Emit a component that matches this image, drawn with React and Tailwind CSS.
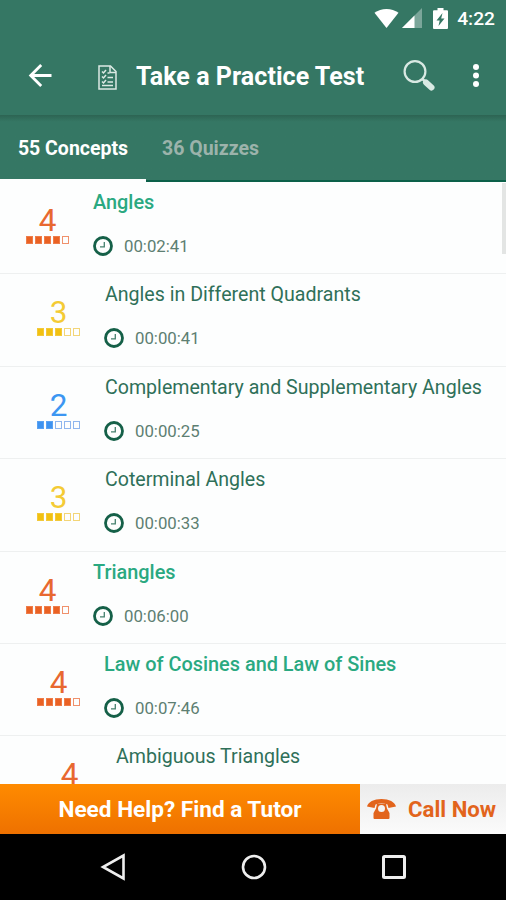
import React from 'react';
import clsx from 'clsx';

const LEVELS = {
    2: { text: 'text-[#3c96f2]', border: 'border-[#8fb6ee]', fill: 'bg-[#3e93f0] border-[#5aa2f2]' },
    3: { text: 'text-[#f4cb35]', border: 'border-[#f3d577]', fill: 'bg-[#f2c110] border-[#f2c93a]' },
    4: { text: 'text-[#e86830]', border: 'border-[#f0916c]', fill: 'bg-[#ea6224] border-[#ee7d4a]' },
};

const CONCEPTS = [
    { title: 'Angles', time: '00:02:41', level: 4, depth: 0, group: true },
    { title: 'Angles in Different Quadrants', time: '00:00:41', level: 3, depth: 1 },
    { title: 'Complementary and Supplementary Angles', time: '00:00:25', level: 2, depth: 1 },
    { title: 'Coterminal Angles', time: '00:00:33', level: 3, depth: 1 },
    { title: 'Triangles', time: '00:06:00', level: 4, depth: 0, group: true },
    { title: 'Law of Cosines and Law of Sines', time: '00:07:46', level: 4, depth: 1, group: true },
    { title: 'Ambiguous Triangles', level: 4, depth: 2 },
];

const INDENT = ['pl-[26px]', 'pl-[37px]', 'pl-[48px]'];

function StatusBar() {
    return (
        <div className="flex h-9 items-center justify-end pr-[11px] text-white">
            <svg className="mr-[3px] h-[21px] w-[25px]" viewBox="0 0 26 21" fill="currentColor"><path d="M0.5 4.6C7.5-.8 18.5-.8 25.5 4.6L13 20.5z" /></svg>
            <svg className="mr-[11px] h-5 w-5" viewBox="0 0 20 20" fill="currentColor"><path d="M20 0v20H0z" opacity="0.35" /><path d="M12.5 7.5V20H0z" /></svg>
            <svg className="mr-[9px] h-[21px] w-[15px]" viewBox="0 0 15 21"><path fill="currentColor" d="M1 2.2h3.5V0h6v2.2H14q1 0 1 1V20q0 1-1 1H1q-1 0-1-1V3.200q0-1 1-1z" /><path fill="#357764" d="M9.5 5L3.5 12.5h3.200L5.500 18l6-7.600H8.200z" /></svg>
            <span className="pt-px text-[19.2px] font-medium leading-none">4:22</span>
        </div>
    );
}

function Toolbar() {
    return (
        <div className="flex h-[79px] items-center pl-[28px] text-white">
            <svg className="h-6 w-6" viewBox="0 0 24 24" fill="none" stroke="currentColor" strokeWidth="2.8"><path d="M23.5 11.500H3M13.200 1L2.700 11.500l10.500 10.500" /></svg>
            <svg className="ml-[46px] mt-1 h-[25px] w-[19px]" viewBox="0 0 19 25" fill="none" stroke="#dce9e4" strokeWidth="1.5">
                <path d="M1 1h11.500L18 6.500V24H1z" />
                <path d="M12 1v6.500h6" />
                <path d="M4 6.500l1.500 1.500L8 5M4 11.500L5.500 13 8 10M4 16.500L5.500 18 8 15M9.500 8h2M9.500 12.500H15M9.500 17H15M4 20.500h11" />
            </svg>
            <h1 className="ml-[19px] mt-0.5 whitespace-nowrap text-[25px] font-bold leading-none tracking-[0.06px]">Take a Practice Test</h1>
            <svg className="ml-auto mr-[38px] h-[32px] w-[32px]" viewBox="0 0 32 32" fill="none" stroke="#d9e9e3">
                <circle cx="12" cy="11.500" r="10.400" strokeWidth="2.200" />
                <path d="M19 18.500l3 3" strokeWidth="2.5" />
                <path d="M23 22.500l5.500 5" strokeWidth="6" strokeLinecap="round" />
            </svg>
            <svg className="mr-[27px] h-6 w-[6px]" viewBox="0 0 6 24" fill="currentColor"><circle cx="3" cy="3" r="3" /><circle cx="3" cy="11.5" r="3" /><circle cx="3" cy="20" r="3" /></svg>
        </div>
    );
}

function Tabs() {
    return (
        <div className="flex h-[67px] bg-linear-to-b from-[#2d6453] via-[#357764] via-10% to-[#357764] text-[19.5px] font-bold leading-none">
            <div className="flex w-[146px] items-center justify-center whitespace-nowrap border-b-3 border-[#fdfefe] pt-[3px] text-white">55 Concepts</div>
            <div className="flex flex-1 items-center whitespace-nowrap border-b-2 border-[#0b6049] pl-4 pt-0.5 text-[#9cb3ab]">36 Quizzes</div>
        </div>
    );
}

function LevelBadge({ level }) {
    const color = LEVELS[level];
    return (
        <div className="flex w-[43px] flex-col items-center pt-[23px]">
            <span className={clsx('text-[31.5px] leading-8', color.text)}>{level}</span>
            <div className="flex gap-[2px]">
                {[1, 2, 3, 4, 5].map((n) => (
                    <span key={n} className={clsx('-mt-px h-2 w-[7px] border', n <= level ? color.fill : color.border)} />
                ))}
            </div>
        </div>
    );
}

function ConceptRow({ concept }) {
    return (
        <li className={clsx('flex h-[92.4px] shrink-0 border-b border-[#eef0f0]', INDENT[concept.depth])}>
            <LevelBadge level={concept.level} />
            <div className="ml-6 flex flex-col pt-[9px]">
                <span className={clsx('whitespace-nowrap leading-6', concept.group ? 'text-[19.9px] font-medium text-[#2aa981]' : 'ml-px text-[19.6px] text-[#2f7059]')}>{concept.title}</span>
                {concept.time && (
                    <div className="mt-[21px] flex items-center">
                        <svg className="h-5 w-5" viewBox="0 0 20 20" fill="none" stroke="#156048"><circle cx="10" cy="10" r="8.5" strokeWidth="2.8" /><path d="M11.300 6v4.800H7" strokeWidth="1.3" opacity="0.8" /></svg>
                        <span className="ml-[11px] text-[16.8px] leading-5 text-[#5d7f72]">{concept.time}</span>
                    </div>
                )}
            </div>
        </li>
    );
}

function HelpBar() {
    return (
        <div className="flex h-[49.5px] leading-none">
            <button className="w-[360px] whitespace-nowrap bg-linear-to-b from-[#ff8b00] to-[#ee7100] pt-[3px] text-[22.6px] font-bold text-white">Need Help? Find a Tutor</button>
            <button className="flex flex-1 items-center whitespace-nowrap bg-linear-to-b from-[#ececec] to-[#fbfbfb] pl-[7px] text-[22.2px] font-bold text-[#e2641c]">
                <svg className="mr-[12px] h-5 w-[29px] shrink-0" viewBox="0 0 29 20" fill="#e2641c">
                    <path d="M0 7.500C1 3 7 0 14.500 0S28 3 29 7.500L21.500 9 20.500 5.500C17 4.200 12 4.200 8.500 5.500L7.500 9z" />
                    <path fillRule="evenodd" d="M10 5h9l1 4.500 2.500 4.500v5q0 1-1 1h-14q-1 0-1-1v-5L9 9.500zM14.500 6a3.500 3.500 0 100 7 3.500 3.500 0 000-7z" />
                </svg>
                <span className="pt-px">Call Now</span>
            </button>
        </div>
    );
}

function NavBar() {
    return (
        <div className="flex h-[66.5px] items-center bg-black">
            <svg className="ml-[100px] h-[28px] w-[26px]" viewBox="0 0 26 28" fill="none" stroke="#eee" strokeWidth="2.6"><path d="M23.500 2.500v23L3 14z" /></svg>
            <svg className="ml-[115px] h-[26px] w-[26px]" viewBox="0 0 26 26" fill="none" stroke="#eee" strokeWidth="2.6"><circle cx="13" cy="13" r="11" /></svg>
            <svg className="ml-[115px] h-6 w-6" viewBox="0 0 24 24" fill="none" stroke="#eee" strokeWidth="3"><rect x="1.5" y="1.5" width="21" height="21" rx="1" /></svg>
        </div>
    );
}

export default function App() {
    return (
        <div className="flex h-[900px] w-[506px] flex-col overflow-hidden bg-[#fdfefe] font-['Roboto',sans-serif]">
            <header className="bg-[#357764]">
                <StatusBar />
                <Toolbar />
                <Tabs />
            </header>
            <main className="relative min-h-0 flex-1 overflow-hidden">
                <ul className="flex flex-col">
                    {CONCEPTS.map((concept) => <ConceptRow key={concept.title} concept={concept} />)}
                </ul>
                <div className="absolute right-0 top-px h-[71px] w-1 bg-[#e3e5e4]" />
            </main>
            <HelpBar />
            <NavBar />
        </div>
    );
}
